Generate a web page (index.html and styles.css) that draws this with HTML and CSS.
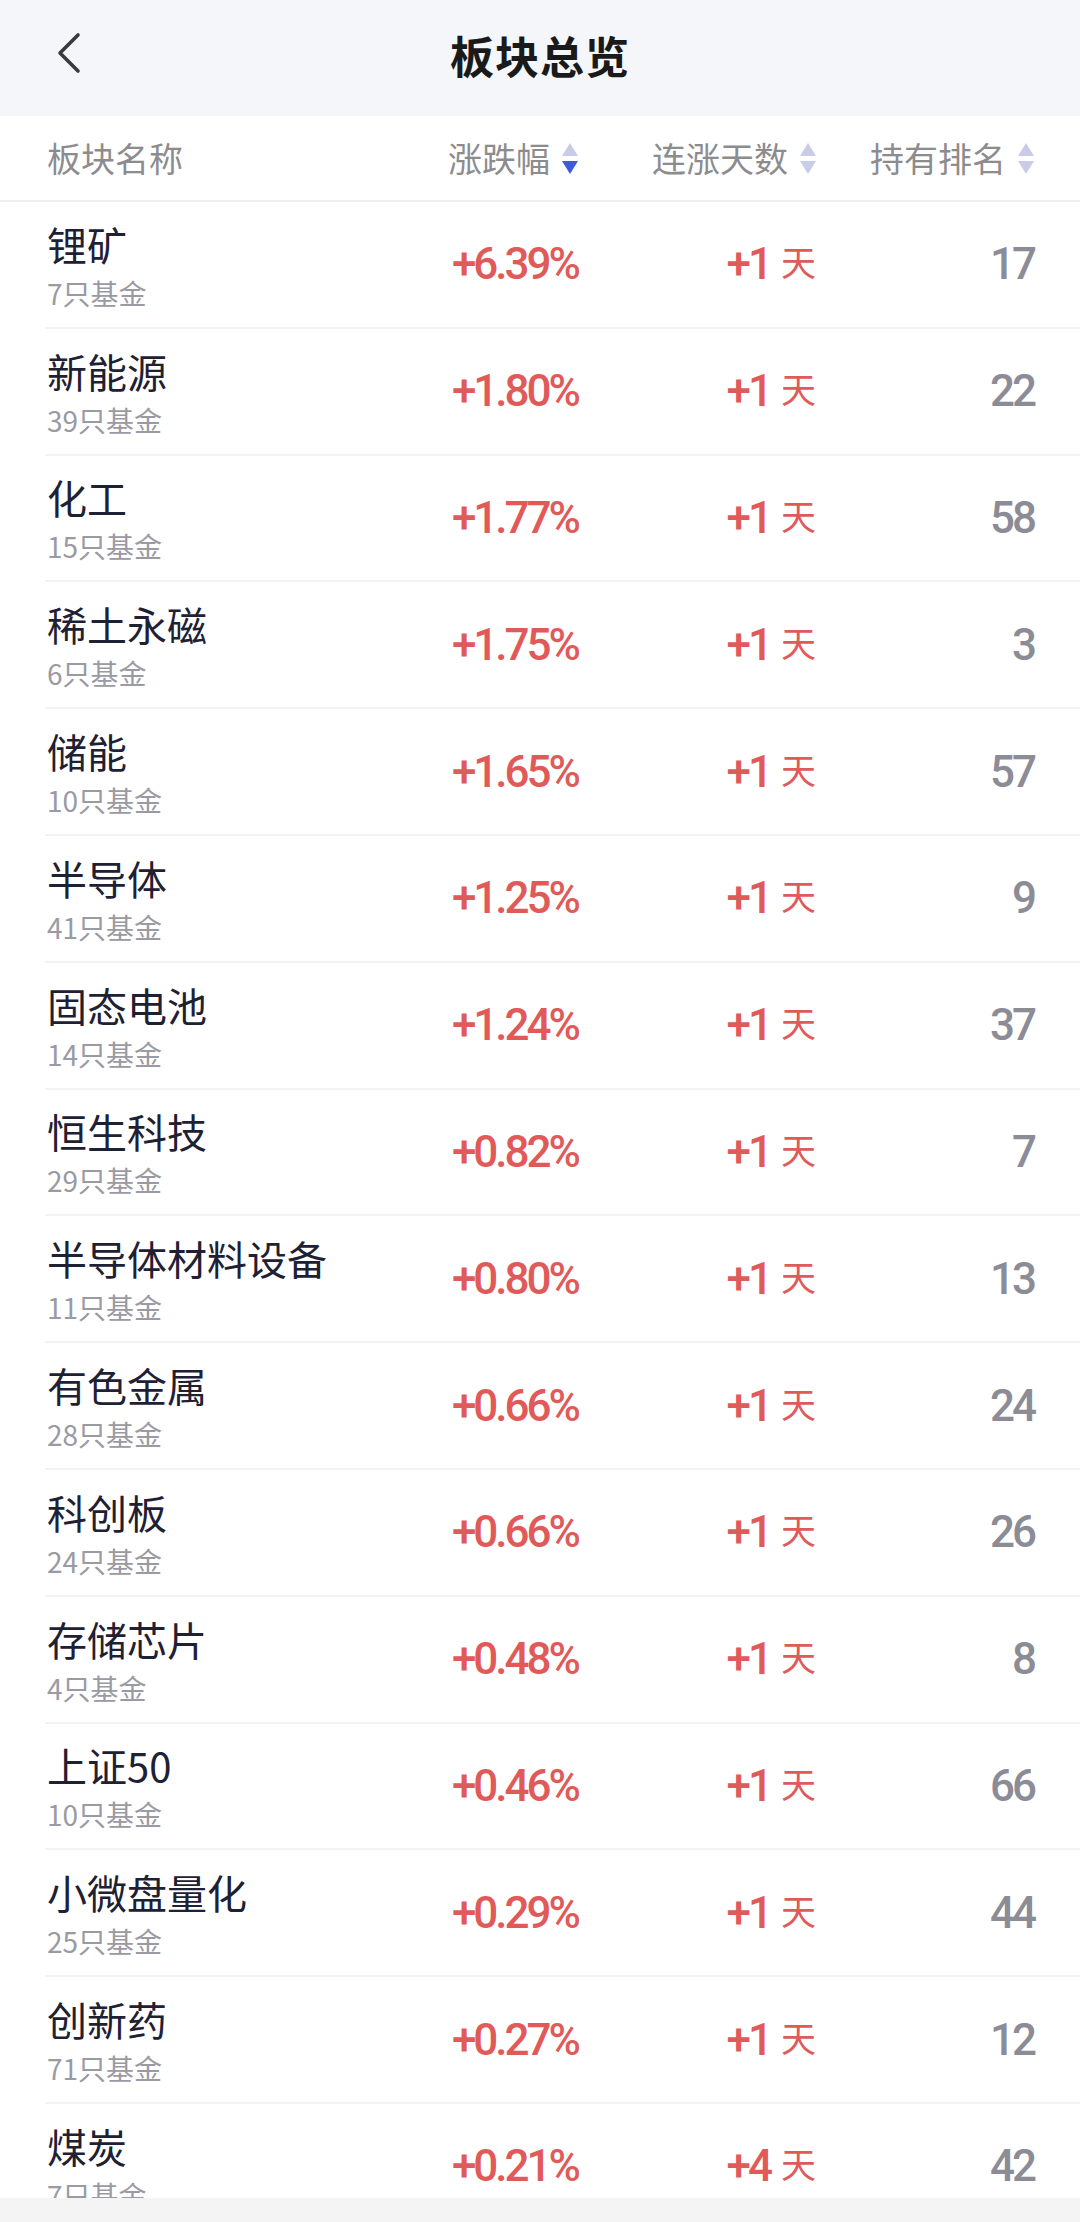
FILE: index.html
```html
<!DOCTYPE html>
<html>
<head>
    <meta charset="utf-8">
    <meta name="viewport" content="width=device-width, initial-scale=1">
    <title>板块总览</title>
    <link rel="stylesheet" href="styles.css">
</head>
<body>
    <div class="page">
        <header class="top-bar">
            <a href="#" class="back-button">
                <svg width="30" height="44" viewBox="0 0 30 44"><path d="M22 4 L4 22 L22 40" fill="none" stroke="#3a3a3c" stroke-width="3.6" stroke-linecap="round" stroke-linejoin="round"/></svg>
            </a>
            <h1>板块总览</h1>
        </header>

        <div class="table-head">
            <div class="th th-name">板块名称</div>
            <div class="th">涨跌幅
                <svg class="sort" viewBox="0 0 16 31"><path d="M8 0 L16 13 L0 13 Z" fill="#c9cbe8"/><path d="M0 18 L16 18 L8 31 Z" fill="#3f5bd6"/></svg>
            </div>
            <div class="th">连涨天数
                <svg class="sort" viewBox="0 0 16 31"><path d="M8 0 L16 13 L0 13 Z" fill="#c9cbe8"/><path d="M0 18 L16 18 L8 31 Z" fill="#c9cbe8"/></svg>
            </div>
            <div class="th">持有排名
                <svg class="sort" viewBox="0 0 16 31"><path d="M8 0 L16 13 L0 13 Z" fill="#c9cbe8"/><path d="M0 18 L16 18 L8 31 Z" fill="#c9cbe8"/></svg>
            </div>
        </div>

        <div class="list" id="list"></div>

        <div class="bottom-bar"></div>
    </div>

    <script>
        // sector rows: name, fund count, change, streak days, rank
        const sectors = [
            ['锂矿', 7, '+6.39%', 1, 17],
            ['新能源', 39, '+1.80%', 1, 22],
            ['化工', 15, '+1.77%', 1, 58],
            ['稀土永磁', 6, '+1.75%', 1, 3],
            ['储能', 10, '+1.65%', 1, 57],
            ['半导体', 41, '+1.25%', 1, 9],
            ['固态电池', 14, '+1.24%', 1, 37],
            ['恒生科技', 29, '+0.82%', 1, 7],
            ['半导体材料设备', 11, '+0.80%', 1, 13],
            ['有色金属', 28, '+0.66%', 1, 24],
            ['科创板', 24, '+0.66%', 1, 26],
            ['存储芯片', 4, '+0.48%', 1, 8],
            ['上证50', 10, '+0.46%', 1, 66],
            ['小微盘量化', 25, '+0.29%', 1, 44],
            ['创新药', 71, '+0.27%', 1, 12],
            ['煤炭', 7, '+0.21%', 4, 42]
        ];

        const list = document.getElementById('list');
        sectors.forEach(function (s) {
            const row = document.createElement('div');
            row.className = 'row';
            row.innerHTML =
                '<div class="name-cell">' +
                    '<div class="name">' + s[0] + '</div>' +
                    '<div class="count">' + s[1] + '只基金</div>' +
                '</div>' +
                '<div class="cell num up">' + s[2] + '</div>' +
                '<div class="cell num up">+' + s[3] + '<span class="day">天</span></div>' +
                '<div class="cell num rank">' + s[4] + '</div>';
            list.appendChild(row);
        });
    </script>
</body>
</html>
```

FILE: styles.css
```css
html, body {
    margin: 0;
    padding: 0;
}
body {
    font-family: "Noto Sans CJK SC", "Noto Sans", sans-serif;
    background: #ffffff;
    color: #1e2033;
}
.page {
    height: 2222px;
    display: flex;
    flex-direction: column;
    overflow: hidden;
}
.top-bar {
    height: 116px;
    box-sizing: border-box;
    padding-bottom: 6px;
    flex-shrink: 0;
    background: #f5f6fa;
    display: flex;
    align-items: center;
    justify-content: center;
    position: relative;
}
.top-bar h1 {
    margin: 0;
    font-size: 44px;
    font-weight: 700;
    color: #1a1a1a;
    letter-spacing: 1px;
}
.back-button {
    position: absolute;
    left: 56px;
    top: 31px;
    display: block;
    width: 30px;
    height: 44px;
}
.back-button svg {
    display: block;
}
.table-head,
.row {
    display: grid;
    grid-template-columns: 1fr 200px 238px 218px;
    align-items: center;
}
.table-head {
    height: 84px;
    flex-shrink: 0;
    padding: 0 46px 0 47px;
    border-bottom: 2px solid #f0f0f2;
}
.th {
    font-size: 34px;
    color: #8c8c8f;
    display: flex;
    align-items: center;
    justify-content: flex-end;
    gap: 12px;
    line-height: 1;
}
.th-name {
    justify-content: flex-start;
}
.sort {
    width: 16px;
    height: 31px;
    display: block;
}
.list {
    flex: 1;
    overflow: hidden;
}
.row {
    height: 126.8px;
    box-sizing: border-box;
    margin-left: 45px;
    padding: 0 46px 0 2px;
    border-bottom: 2px solid #f3f3f5;
}
.name-cell {
    display: flex;
    flex-direction: column;
}
.name {
    font-size: 40px;
    line-height: 58px;
    color: #1e2033;
}
.count {
    font-size: 28px;
    line-height: 41px;
    color: #999aa3;
}
.cell {
    text-align: right;
}
.num {
    font-family: Roboto, "Noto Sans", sans-serif;
    font-weight: 500;
    font-size: 44px;
    letter-spacing: -3px;
    line-height: 1;
}
.up {
    color: #e15a5a;
}
.rank {
    color: #8b8c96;
}
.day {
    font-family: "Noto Sans CJK SC", sans-serif;
    font-weight: 400;
    font-size: 35px;
    letter-spacing: 0;
    margin-left: 11px;
    vertical-align: 3px;
}
.bottom-bar {
    height: 24px;
    flex-shrink: 0;
    background: #f4f4f5;
}
```
